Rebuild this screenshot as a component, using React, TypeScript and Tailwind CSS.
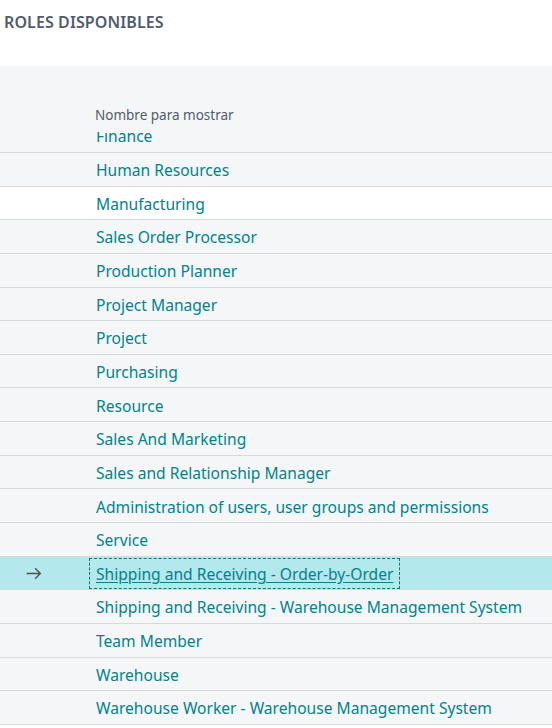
const roles = [
  "Human Resources",
  "Manufacturing",
  "Sales Order Processor",
  "Production Planner",
  "Project Manager",
  "Project",
  "Purchasing",
  "Resource",
  "Sales And Marketing",
  "Sales and Relationship Manager",
  "Administration of users, user groups and permissions",
  "Service",
  "Shipping and Receiving - Order-by-Order",
  "Shipping and Receiving - Warehouse Management System",
  "Team Member",
  "Warehouse",
  "Warehouse Worker - Warehouse Management System",
];

const font = { fontFamily: '"Segoe UI", "Noto Sans", sans-serif' };

export default function App() {
  return (
    <div className="h-[728px] w-[552px] overflow-hidden bg-white" style={font}>
      <div className="h-[66px] pl-1 pt-[10px]">
        <h1 className="text-[16px] font-semibold tracking-[0.1px] text-[#505c6d]">ROLES DISPONIBLES</h1>
      </div>
      <div className="bg-[#f5f6f8]">
        <div className="flex h-[66px] items-end pb-[7px] pl-[95px]">
          <span className="text-[13.5px] text-[#505c6d]">Nombre para mostrar</span>
        </div>
        <div className="flex h-[21px] items-end overflow-hidden border-b border-[#d8d9db] pl-[96px]">
          <div className="flex h-[33px] shrink-0 items-center pt-[3px] text-[15.6px] text-[#00838b]">Finance</div>
        </div>
        {roles.map((r) => {
          const selected = r === "Shipping and Receiving - Order-by-Order";
          const white = r === "Manufacturing";
          return (
            <div
              key={r}
              className={
                "flex h-[33.65px] items-center border-b border-[#d8d9db] " +
                (selected ? "bg-[#b3e8ec]" : white ? "bg-white" : "bg-[#f5f6f8]")
              }
            >
              <div className="flex w-[89px] shrink-0 justify-center pr-[22px]">
                {selected && (
                  <svg width="17" height="17" viewBox="0 0 16 16" fill="none" stroke="#505050" strokeWidth="1.2">
                    <path d="M1.5 8h13M9.5 3l5 5-5 5" />
                  </svg>
                )}
              </div>
              {selected ? (
                <span className="flex h-[31px] items-center border border-dashed border-[#1e6f75] px-[6px] pt-[3px] text-[15.6px] text-[#00838b] underline underline-offset-2">
                  {r}
                </span>
              ) : (
                <span className="pl-[7px] pt-[3px] text-[15.6px] text-[#00838b]">{r}</span>
              )}
            </div>
          );
        })}
      </div>
    </div>
  );
}
